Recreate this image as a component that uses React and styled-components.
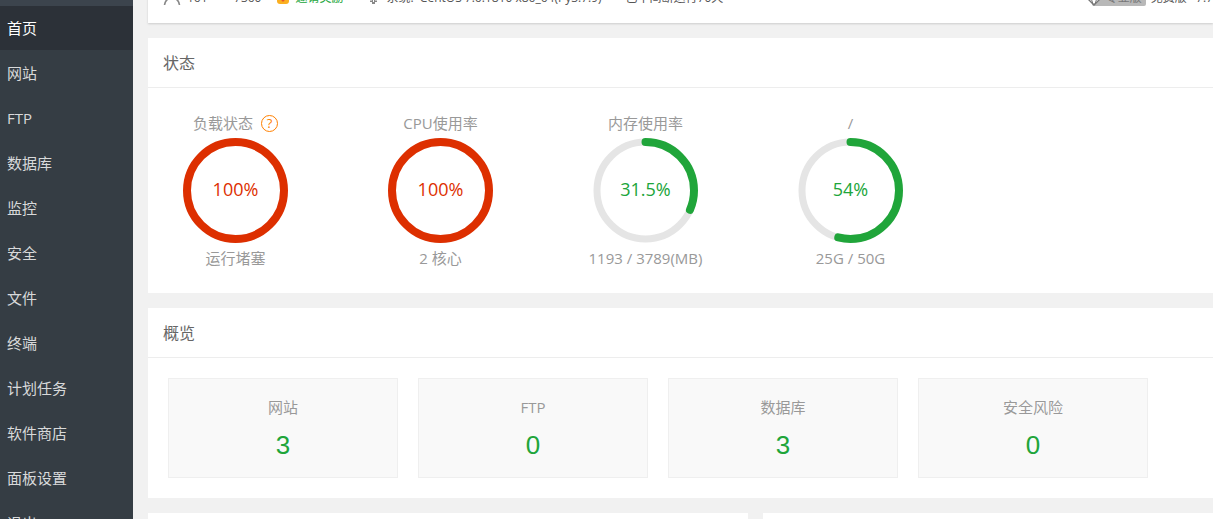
import React from 'react';
import styled, { createGlobalStyle } from 'styled-components';

const GlobalStyle = createGlobalStyle`
  * {
    box-sizing: border-box;
  }
  body {
    margin: 0;
    background-color: #f1f1f1;
    color: #555;
    font-family: 'Open Sans', 'Noto Sans CJK SC', sans-serif;
    font-size: 15px;
  }
`;

const Page = styled.div`
  display: flex;
  height: 100vh;
  overflow: hidden;
`;

const Sidebar = styled.nav`
  flex: none;
  width: 133px;
  padding-top: 6px;
  background: linear-gradient(#3c444d 6px, #353d44 6px);
`;

const MenuLink = styled.a`
  display: block;
  height: 44px;
  margin-bottom: 1px;
  padding-left: 7px;
  line-height: 44px;
  color: ${(props) => (props.$active ? '#fff' : '#d8d9da')};
  background-color: ${(props) => (props.$active ? '#2c3138' : 'transparent')};
  text-decoration: none;
  white-space: nowrap;
`;

const Main = styled.main`
  flex: 1;
  min-width: 0;
  display: flex;
  flex-direction: column;
  gap: 15px;
  margin-top: -27px;
  padding-left: 15px;
`;

const TopBar = styled.header`
  flex: none;
  display: flex;
  align-items: center;
  height: 50px;
  padding-left: 15px;
  background-color: white;
  box-shadow: 0 1px 2px #ccc;
  font-size: 12px;
  line-height: 16px;
  white-space: nowrap;
  overflow: hidden;
`;

const TopItem = styled.span`
  display: flex;
  align-items: center;
  gap: 6px;
  margin-right: ${(props) => (props.$tight ? '16px' : '24px')};
`;

const InviteLink = styled.a`
  color: #20a53a;
  text-decoration: none;
`;

const Version = styled.div`
  display: flex;
  align-items: center;
  gap: 5px;
  margin-left: auto;
`;

const ProBadge = styled.span`
  display: flex;
  align-items: center;
  height: 15px;
  padding-right: 4px;
  border-radius: 2px;
  background-color: #b8b8b8;
  color: #777;

  > svg {
    margin: 0 4px 0 -6px;
  }
`;

const Panel = styled.section`
  flex: none;
  background-color: white;
`;

const PanelTitle = styled.h2`
  height: 50px;
  margin: 0;
  padding-left: 15px;
  border-bottom: 1px solid #ededed;
  color: #666;
  font-size: 16px;
  font-weight: normal;
  line-height: 50px;
`;

const GaugeList = styled.div`
  display: flex;
  gap: 60px;
  padding: 20px 15px;
`;

const Gauge = styled.div`
  display: flex;
  flex-direction: column;
  align-items: center;
  width: 145px;
  color: #999;
  line-height: 30px;
  white-space: nowrap;
`;

const GaugeLabel = styled.div`
  display: flex;
  align-items: center;
  gap: 8px;
  height: 30px;
`;

const HelpButton = styled.button`
  width: 17px;
  height: 17px;
  padding: 0;
  border: 1px solid #ff8000;
  border-radius: 50%;
  background: none;
  color: #ff8000;
  font-family: inherit;
  font-size: 13px;
  line-height: 15px;
`;

const Dial = styled.div`
  display: grid;
  place-items: center;
  height: 105px;
  color: ${(props) => props.$color};
  font-size: 18px;

  > * {
    grid-area: 1 / 1;
  }
`;

const DialValue = styled.span`
  padding-bottom: 4px;
`;

const CardList = styled.div`
  display: flex;
  gap: 20px;
  padding: 20px;
`;

const Card = styled.div`
  width: 230px;
  height: 100px;
  padding-top: 16px;
  border: 1px solid #efefef;
  background-color: #f9f9f9;
  color: #999;
  line-height: 25px;
  text-align: center;
`;

const CardLink = styled.a`
  display: block;
  margin-top: 8px;
  color: #20a53a;
  font-family: 'Liberation Sans', sans-serif;
  font-size: 26px;
  line-height: 34px;
  text-decoration: none;
`;

const BottomRow = styled.div`
  flex: none;
  display: grid;
  grid-template-columns: 4fr 3fr;
  gap: 15px;
`;

const BottomPanel = styled(Panel)`
  min-height: 300px;
`;

const menu = ['首页', '网站', 'FTP', '数据库', '监控', '安全', '文件', '终端', '计划任务', '软件商店', '面板设置', '退出'];

const gauges = [
  { label: '负载状态', value: 100, detail: '运行堵塞', help: true },
  { label: 'CPU使用率', value: 100, detail: '2 核心' },
  { label: '内存使用率', value: 31.5, detail: '1193 / 3789(MB)' },
  { label: '/', value: 54, detail: '25G / 50G' },
];

const cards = [
  { label: '网站', count: 3 },
  { label: 'FTP', count: 0 },
  { label: '数据库', count: 3 },
  { label: '安全风险', count: 0 },
];

const UserIcon = () => (
  <svg width="18" height="18" viewBox="0 0 18 18" fill="none" stroke="#888" strokeWidth="1.6">
    <circle cx="9" cy="5.5" r="4.5" />
    <path d="M1.500 16C2 12.500 3.500 10.500 6 9.500M16.500 16C16 12.500 14.500 10.500 12 9.500" />
  </svg>
);

const GiftIcon = () => (
  <svg width="12" height="12" viewBox="0 0 12 12">
    <rect width="12" height="12" rx="3" fill="#fbaf20" />
    <path d="M0 3L6 8L12 3V1H0Z" fill="#f58a1f" />
    <circle cx="6" cy="8" r="1.5" fill="#e8542a" />
  </svg>
);

const SystemIcon = () => (
  <svg width="13" height="12" viewBox="0 0 13 12" fill="#888">
    <path d="M1 0H12V8H10V10H8V12H5V10H3V8H1Z" />
    <path d="M4 7V9M6.500 7V10M9 7V9" stroke="#fff" />
  </svg>
);

const DiamondIcon = () => (
  <svg width="16" height="16" viewBox="0 0 16 16" fill="#fff" stroke="#777" strokeWidth="1.4">
    <path d="M4 3H12L15 8L8 15L1 8Z" />
    <path d="M1 8H15M5 8L7 14M11 8L9 14" strokeWidth="1" />
  </svg>
);

const RADIUS = 48.5;
const LENGTH = 2 * Math.PI * RADIUS;

function Ring({ value, color }) {
  return (
    <svg width="105" height="105" viewBox="0 0 105 105" fill="none">
      <circle cx="52.5" cy="52.5" r={RADIUS} stroke="#e5e5e5" strokeWidth="7" />
      <circle
        cx="52.5"
        cy="52.5"
        r={RADIUS}
        stroke={color}
        strokeWidth="8"
        strokeLinecap="round"
        strokeDasharray={`${(LENGTH * value) / 100} ${LENGTH}`}
        transform="rotate(-90 52.5 52.5)"
      />
    </svg>
  );
}

function StatusGauge({ label, value, detail, help }) {
  const color = value >= 90 ? '#dd2f00' : '#20a53a';
  return (
    <Gauge>
      <GaugeLabel>
        {label}
        {help && <HelpButton type="button" aria-label="负载说明">?</HelpButton>}
      </GaugeLabel>
      <Dial $color={color}>
        <Ring value={value} color={color} />
        <DialValue>{value}%</DialValue>
      </Dial>
      {detail}
    </Gauge>
  );
}

function App() {
  return (
    <>
      <GlobalStyle />
      <Page>
        <Sidebar>
          {menu.map((name, index) => (
            <MenuLink key={name} href="#" $active={index === 0}>{name}</MenuLink>
          ))}
        </Sidebar>
        <Main>
          <TopBar>
            <TopItem $tight><UserIcon />161****7360</TopItem>
            <TopItem><GiftIcon /><InviteLink href="#">邀请奖励</InviteLink></TopItem>
            <TopItem><SystemIcon />系统:&nbsp; CentOS 7.6.1810 x86_64(Py3.7.9)</TopItem>
            <TopItem>已不间断运行70天</TopItem>
            <Version>
              <ProBadge><DiamondIcon />专业版</ProBadge>
              <span>免费版&nbsp; &nbsp;7.7</span>
            </Version>
          </TopBar>
          <Panel>
            <PanelTitle>状态</PanelTitle>
            <GaugeList>
              {gauges.map((gauge) => <StatusGauge key={gauge.label} {...gauge} />)}
            </GaugeList>
          </Panel>
          <Panel>
            <PanelTitle>概览</PanelTitle>
            <CardList>
              {cards.map((card) => (
                <Card key={card.label}>
                  {card.label}
                  <CardLink href="#">{card.count}</CardLink>
                </Card>
              ))}
            </CardList>
          </Panel>
          <BottomRow>
            <BottomPanel />
            <BottomPanel />
          </BottomRow>
        </Main>
      </Page>
    </>
  );
}

export default App;
